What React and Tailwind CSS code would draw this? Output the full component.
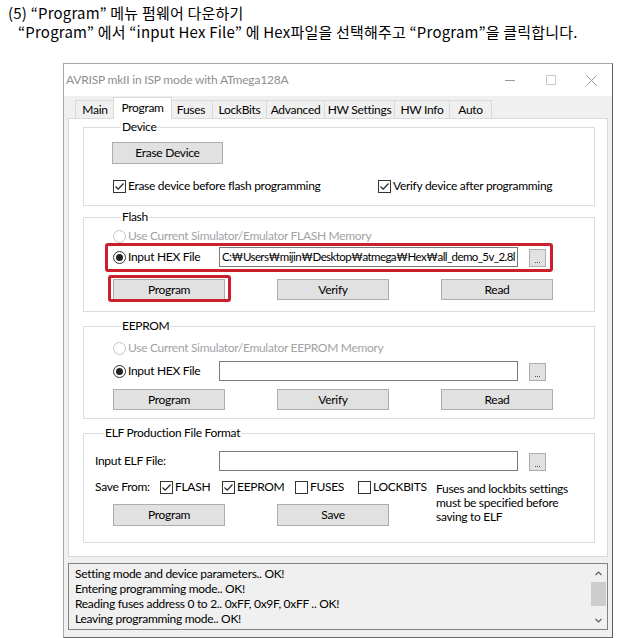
import React from 'react';

const Check = ({ checked }) => (
  <span className="w-[13px] h-[13px] border border-[#333] bg-white flex items-center justify-center shrink-0">
    {checked && (
      <svg width="11" height="11" viewBox="0 0 11 11">
        <path d="M1.5 5.5 L4.2 8.2 L9.5 2.5" fill="none" stroke="#222" strokeWidth="1.2" />
      </svg>
    )}
  </span>
);

const Radio = ({ checked, disabled }) => (
  <span
    className={`w-[13px] h-[13px] rounded-full border bg-white flex items-center justify-center shrink-0 ${
      disabled ? 'border-[#c4c4c4]' : 'border-[#333]'
    }`}
  >
    {checked && <span className="w-[7px] h-[7px] rounded-full bg-[#222]" />}
  </span>
);

const Btn = ({ children, className = '' }) => (
  <div
    className={`h-[21px] bg-[#e1e1e1] border border-[#adadad] flex items-center justify-center text-[12px] text-black ${className}`}
  >
    {children}
  </div>
);

// small "..." browse button next to file inputs
const Browse = () => (
  <div className="w-[17px] h-[18px] bg-[#e1e1e1] border border-[#adadad] flex items-end justify-center pb-[3px]">
    <span className="flex gap-[1px]">
      <span className="w-[1px] h-[1px] bg-[#555]" />
      <span className="w-[1px] h-[1px] bg-[#555]" />
      <span className="w-[1px] h-[1px] bg-[#555]" />
    </span>
  </div>
);

const Group = ({ label, className = '', children }) => (
  <fieldset className={`border border-[#dcdcdc] relative ${className}`}>
    <legend className="ml-[9px] px-[1px] text-[12px] leading-[16px] text-black">{label}</legend>
    {children}
  </fieldset>
);

const tabs = [
  { name: 'Main', w: 'w-[40px]' },
  { name: 'Program', w: 'w-[55px]', active: true },
  { name: 'Fuses', w: 'w-[43px]' },
  { name: 'LockBits', w: 'w-[54px]' },
  { name: 'Advanced', w: 'w-[58px]' },
  { name: 'HW Settings', w: 'w-[70px]' },
  { name: 'HW Info', w: 'w-[55px]' },
  { name: 'Auto', w: 'w-[42px]' },
];

const ButtonRow = ({ labels, className = '' }) => (
  <div className={`flex gap-[52px] ${className}`}>
    {labels.map((l) => (
      <Btn key={l} className="w-[112px]">
        {l}
      </Btn>
    ))}
  </div>
);

export default function App() {
  return (
    <div className="w-[635px] h-[638px] overflow-hidden bg-white font-['Lato','Noto_Sans_CJK_KR',sans-serif] text-black">
      <div className="pl-[8px] pt-[3px] text-[15px] leading-[19px] tracking-[0.2px] font-['Noto_Sans_CJK_KR',sans-serif]">
        <p>(5) “Program” 메뉴 펌웨어 다운하기</p>
        <p className="pl-[10px]">“Program” 에서 “input Hex File” 에 Hex파일을 선택해주고 “Program”을 클릭합니다.</p>
      </div>

      <div className="mt-[22px] ml-[63px] w-[550px] h-[575px] border border-l-[#a8a8a8] border-t-[#a8a8a8] border-r-[#5a5a5a] border-b-[#6a6a6a] flex flex-col tracking-[-0.3px]">
        {/* title bar */}
        <div className="h-[32px] bg-white flex items-center pl-[2px]">
          <span className="text-[12px] text-[#8f8f8f] tracking-[-0.2px]">AVRISP mkII in ISP mode with ATmega128A</span>
          <div className="ml-auto flex h-full">
            <div className="w-[41px] flex items-center justify-center">
              <span className="w-[10px] h-[1px] bg-[#999]" />
            </div>
            <div className="w-[41px] flex items-center justify-center">
              <span className="w-[10px] h-[10px] border border-[#ccc]" />
            </div>
            <div className="w-[41px] flex items-center justify-center">
              <svg width="11" height="11" viewBox="0 0 11 11">
                <path d="M0.5 0.5 L10.5 10.5 M10.5 0.5 L0.5 10.5" stroke="#999" strokeWidth="1" />
              </svg>
            </div>
          </div>
        </div>

        <div className="flex-1 bg-[#f0f0f0] px-[4px]">
          {/* tab strip */}
          <div className="h-[22px] flex items-end pl-[7px] text-[12px]">
            {tabs.map((t) =>
              t.active ? (
                <div
                  key={t.name}
                  className="-mx-[2px] w-[59px] h-[22px] bg-white border border-b-0 border-[#d9d9d9] flex items-start pt-[1px] justify-center relative z-10 -mb-[1px] leading-[18px]"
                >
                  {t.name}
                </div>
              ) : (
                <div
                  key={t.name}
                  className={`${t.w} h-[18px] border border-b-0 border-l-0 first:border-l border-[#d9d9d9] flex items-center justify-center leading-[16px]`}
                >
                  {t.name}
                </div>
              )
            )}
          </div>

          {/* tab page */}
          <div className="h-[439px] bg-white border border-[#d9d9d9] pl-[14px] pr-[12px] text-[12px]">
            <Group label="Device" className="pl-[28px] pb-[11px]">
              <Btn className="w-[111px] h-[22px] mt-[7px]">Erase Device</Btn>
              <div className="mt-[14px] flex h-[16px] items-center">
                <div className="w-[266px] flex items-center gap-[2px] pl-[1px]">
                  <Check checked />
                  <span>Erase device before flash programming</span>
                </div>
                <div className="flex items-center gap-[2px]">
                  <Check checked />
                  <span>Verify device after programming</span>
                </div>
              </div>
            </Group>

            <Group label="Flash" className="mt-[3px] pl-[28px] pb-[11px]">
              <div className="mt-[3px] h-[16px] flex items-center gap-[2px] pl-[1px] text-[#a3a3a3]">
                <Radio disabled />
                <span>Use Current Simulator/Emulator FLASH Memory</span>
              </div>
              <div className="relative mt-[3px] w-[434px]">
                <div className="h-[20px] flex items-center">
                  <div className="w-[107px] flex items-center gap-[2px] pl-[1px]">
                    <Radio checked />
                    <span>Input HEX File</span>
                  </div>
                  <div className="w-[299px] h-[20px] border border-[#7a7a7a] bg-white pl-[2px] leading-[18px] overflow-hidden whitespace-nowrap text-[11.5px] tracking-[-0.6px] font-['Lato','DejaVu_Sans',sans-serif]">
                    C:₩Users₩mijin₩Desktop₩atmega₩Hex₩all_demo_5v_2.8l
                  </div>
                  <div className="ml-[11px] mt-[2px]">
                    <Browse />
                  </div>
                </div>
                <span className="absolute -left-[7px] -right-[7px] -top-[4px] -bottom-[5px] border-[3px] border-[#cc1f2b] rounded-[3px]" />
              </div>
              <div className="mt-[12px] flex gap-[52px] pl-[1px]">
                <div className="relative">
                  <Btn className="w-[112px]">Program</Btn>
                  <span className="absolute -left-[5px] -right-[6px] -top-[4px] -bottom-[2px] border-[3px] border-[#cc1f2b] rounded-[3px]" />
                </div>
                <Btn className="w-[112px]">Verify</Btn>
                <Btn className="w-[112px]">Read</Btn>
              </div>
            </Group>

            <Group label="EEPROM" className="mt-[6px] pl-[28px] pb-[8px]">
              <div className="mt-[6px] h-[16px] flex items-center gap-[2px] pl-[1px] text-[#a3a3a3]">
                <Radio disabled />
                <span>Use Current Simulator/Emulator EEPROM Memory</span>
              </div>
              <div className="mt-[5px] h-[20px] flex items-center">
                <div className="w-[107px] flex items-center gap-[2px] pl-[1px]">
                  <Radio checked />
                  <span>Input HEX File</span>
                </div>
                <div className="w-[299px] h-[20px] border border-[#7a7a7a] bg-white" />
                <div className="ml-[11px] mt-[2px]">
                  <Browse />
                </div>
              </div>
              <ButtonRow labels={['Program', 'Verify', 'Read']} className="mt-[8px] pl-[1px]" />
            </Group>

            <Group label="ELF Production File Format" className="mt-[6px] pl-[11px] pb-[16px]">
              <div className="mt-[10px] h-[20px] flex items-center">
                <span className="w-[124px]">Input ELF File:</span>
                <div className="w-[299px] h-[20px] border border-[#7a7a7a] bg-white" />
                <div className="ml-[11px] mt-[2px]">
                  <Browse />
                </div>
              </div>
              <div className="mt-[8px] flex">
                <div className="w-[341px]">
                  <div className="h-[16px] flex items-center">
                    <span className="w-[65px]">Save From:</span>
                    <div className="w-[62px] flex items-center gap-[2px]">
                      <Check checked />
                      <span>FLASH</span>
                    </div>
                    <div className="w-[73px] flex items-center gap-[2px]">
                      <Check checked />
                      <span>EEPROM</span>
                    </div>
                    <div className="w-[63px] flex items-center gap-[2px]">
                      <Check />
                      <span>FUSES</span>
                    </div>
                    <div className="flex items-center gap-[2px]">
                      <Check />
                      <span>LOCKBITS</span>
                    </div>
                  </div>
                  <div className="mt-[9px] flex gap-[52px] pl-[18px]">
                    <Btn className="w-[112px] h-[22px]">Program</Btn>
                    <Btn className="w-[112px] h-[22px]">Save</Btn>
                  </div>
                </div>
                <p className="mt-[3px] leading-[14px]">
                  Fuses and lockbits settings
                  <br />
                  must be specified before
                  <br />
                  saving to ELF
                </p>
              </div>
            </Group>
          </div>

          {/* status log */}
          <div className="mt-[6px] h-[67px] border border-[#828282] bg-[#f0f0f0] flex text-[12px]">
            <div className="flex-1 pl-[6px] pt-[2px] leading-[15px]">
              <p>Setting mode and device parameters.. OK!</p>
              <p>Entering programming mode.. OK!</p>
              <p>Reading fuses address 0 to 2.. 0xFF, 0x9F, 0xFF .. OK!</p>
              <p>Leaving programming mode.. OK!</p>
            </div>
            <div className="w-[17px] flex flex-col items-center">
              <svg width="9" height="17" viewBox="0 0 9 17" className="mt-[1px]">
                <path d="M1.5 10 L4.5 7 L7.5 10" fill="none" stroke="#606060" strokeWidth="1.2" />
              </svg>
              <div className="w-[15px] h-[24px] bg-[#cdcdcd]" />
              <svg width="9" height="17" viewBox="0 0 9 17" className="mt-auto">
                <path d="M1.5 7 L4.5 10 L7.5 7" fill="none" stroke="#606060" strokeWidth="1.2" />
              </svg>
            </div>
          </div>
        </div>
      </div>
    </div>
  );
}
